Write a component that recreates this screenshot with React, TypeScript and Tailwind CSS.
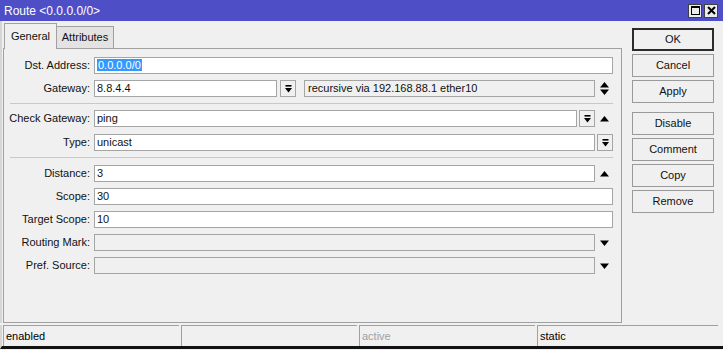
import React from "react";
import clsx from "clsx";

// small drop-down button (bar over a down arrow)
function DropBtn({ className }: { className?: string }) {
  return (
    <div
      className={clsx(
        "flex h-full w-[16px] shrink-0 items-center justify-center border border-[#a5a5a5] bg-[#f0f0f0]",
        className
      )}
    >
      <svg width="7" height="8" viewBox="0 0 7 8">
        <rect x="0.5" y="0" width="6" height="1.6" fill="#000" />
        <polygon points="0,3 7,3 3.5,7.5" fill="#000" />
      </svg>
    </div>
  );
}

function Arrow({ dir }: { dir: "up" | "down" | "both" }) {
  return (
    <div className="flex h-full w-[18px] shrink-0 items-center justify-center">
      {dir === "up" && (
        <svg width="9" height="6" viewBox="0 0 9 6">
          <polygon points="4.5,0 9,5.5 0,5.5" fill="#000" />
        </svg>
      )}
      {dir === "down" && (
        <svg width="9" height="6" viewBox="0 0 9 6">
          <polygon points="0,0.5 9,0.5 4.5,6" fill="#000" />
        </svg>
      )}
      {dir === "both" && (
        <svg width="9" height="13" viewBox="0 0 9 13">
          <polygon points="4.5,0 9,5.5 0,5.5" fill="#000" />
          <polygon points="0,7.5 9,7.5 4.5,13" fill="#000" />
        </svg>
      )}
    </div>
  );
}

function Field({
  width,
  value,
  disabled,
  className,
  children,
}: {
  width: string;
  value?: string;
  disabled?: boolean;
  className?: string;
  children?: React.ReactNode;
}) {
  return (
    <div
      className={clsx(
        "h-full shrink-0 overflow-hidden whitespace-nowrap border border-[#a5a5a5] pl-[2px] leading-[15px]",
        disabled ? "bg-[#f0f0f0]" : "bg-white",
        width,
        className
      )}
    >
      {children ?? value}
    </div>
  );
}

function Row({
  label,
  className,
  children,
}: {
  label: string;
  className?: string;
  children: React.ReactNode;
}) {
  return (
    <div className={clsx("flex h-[17px] items-center", className)}>
      <div className="w-[86px] shrink-0 text-right">{label}:</div>
      <div className="ml-[4px] flex h-full items-center">{children}</div>
    </div>
  );
}

function Sep({ className }: { className?: string }) {
  return <div className={clsx("ml-[6px] mt-[6px] h-px w-[603px] bg-[#c8c8c8]", className)} />;
}

function Btn({ label, def }: { label: string; def?: boolean }) {
  return (
    <div
      className={clsx(
        "flex h-[23px] items-center justify-center bg-[#f0f0f0]",
        def ? "border-2 border-[#2b2b2b]" : "border border-[#9a9a9a]"
      )}
    >
      {label}
    </div>
  );
}

function Cell({ text, muted, w }: { text?: string; muted?: boolean; w: string }) {
  return (
    <div
      className={clsx(
        "h-full border-l border-t border-[#a0a0a0] pl-[2px] leading-[20px]",
        muted ? "text-[#a0a0a0]" : "text-black",
        w
      )}
    >
      {text}
    </div>
  );
}

export default function App() {
  return (
    <div
      className="flex h-[350px] w-[723px] flex-col bg-[#f0f0f0] text-[11px] text-[#111]"
      style={{ fontFamily: '"Liberation Sans", Arial, sans-serif' }}
    >
      {/* title bar */}
      <div className="flex h-[21px] shrink-0 items-center justify-between bg-[#4e4ec7] pl-[4px] pr-[5px]">
        <span className="text-[12px] text-white">Route &lt;0.0.0.0/0&gt;</span>
        <div className="flex gap-[2px]">
          <div className="flex h-[14px] w-[14px] items-center justify-center border border-[#404040] bg-[#ececec]">
            <div className="h-[9px] w-[9px] border border-t-2 border-black" />
          </div>
          <div className="flex h-[14px] w-[14px] items-center justify-center border border-[#404040] bg-[#ececec]">
            <svg width="9" height="9" viewBox="0 0 9 9">
              <path d="M1 1 L8 8 M8 1 L1 8" stroke="#000" strokeWidth="2" />
            </svg>
          </div>
        </div>
      </div>

      <div className="flex border-l-2 border-[#d6d6d6]">
        {/* left: tabs + panel */}
        <div className="ml-[1px] flex w-[619px] flex-col pt-[2px]">
          <div className="flex h-[25px] items-end">
            <div className="relative z-10 -mb-px ml-[1px] flex h-[26px] w-[53px] items-center justify-center border border-b-0 border-[#a0a0a0] bg-[#f0f0f0]">
              General
            </div>
            <div className="flex h-[22px] w-[57px] items-center justify-center border border-b-0 border-l-0 border-[#a0a0a0] bg-[#e3e3e3]">
              Attributes
            </div>
          </div>

          <div className="flex h-[275px] flex-col border border-[#a0a0a0] pt-[8px]">
            <div className="flex flex-col gap-[6px]">
              <Row label="Dst. Address">
                <Field width="w-[519px]">
                  <span className="bg-[#3399ff] px-px text-white">0.0.0.0/0</span>
                </Field>
              </Row>
              <Row label="Gateway">
                <Field width="w-[183px]" value="8.8.4.4" />
                <DropBtn className="ml-[3px]" />
                <Field width="w-[291px]" className="ml-[8px] pl-[3px]" disabled value="recursive via 192.168.88.1 ether10" />
                <Arrow dir="both" />
              </Row>
            </div>
            <Sep className="mb-[6px]" />
            <div className="flex flex-col">
              <Row label="Check Gateway">
                <Field width="w-[483px]" value="ping" />
                <DropBtn className="ml-[2px]" />
                <Arrow dir="up" />
              </Row>
              <Row label="Type" className="mt-[7px]">
                <Field width="w-[501px]" value="unicast" />
                <DropBtn className="ml-[2px]" />
              </Row>
            </div>
            <Sep className="mb-[7px]" />
            <div className="flex flex-col gap-[6px]">
              <Row label="Distance">
                <Field width="w-[501px]" value="3" />
                <Arrow dir="up" />
              </Row>
              <Row label="Scope">
                <Field width="w-[519px]" value="30" />
              </Row>
              <Row label="Target Scope">
                <Field width="w-[519px]" value="10" />
              </Row>
              <Row label="Routing Mark">
                <Field width="w-[501px]" disabled />
                <Arrow dir="down" />
              </Row>
              <Row label="Pref. Source">
                <Field width="w-[501px]" disabled />
                <Arrow dir="down" />
              </Row>
            </div>
          </div>
        </div>

        {/* right: buttons */}
        <div className="ml-[10px] flex w-[82px] flex-col pt-[7px]">
          <div className="flex flex-col gap-[3px]">
            <Btn label="OK" def />
            <Btn label="Cancel" />
            <Btn label="Apply" />
          </div>
          <div className="mt-[9px] flex flex-col gap-[3px]">
            <Btn label="Disable" />
            <Btn label="Comment" />
            <Btn label="Copy" />
            <Btn label="Remove" />
          </div>
        </div>
      </div>

      {/* status bar */}
      <div className="mt-[2px] flex h-[24px] border-b-[3px] border-l-2 border-b-[#111] border-l-[#d6d6d6] pl-[1px]">
        <Cell text="enabled" w="w-[176px]" />
        <Cell w="ml-[2px] w-[176px]" />
        <Cell text="active" muted w="ml-[2px] w-[176px]" />
        <Cell text="static" w="ml-[2px] w-[181px]" />
      </div>
    </div>
  );
}
